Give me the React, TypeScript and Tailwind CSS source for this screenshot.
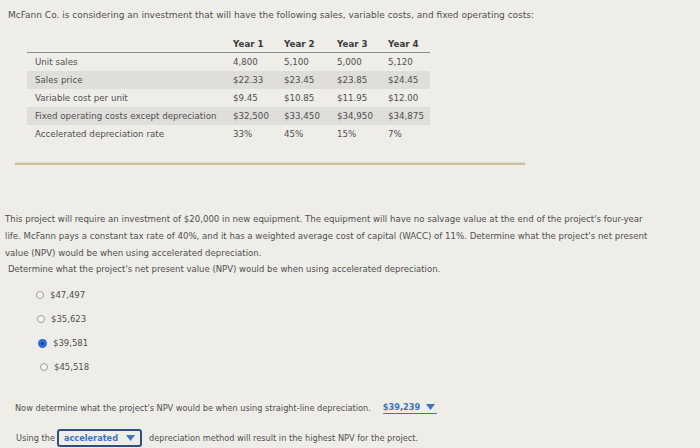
import React from 'react';

const years = ['Year 1', 'Year 2', 'Year 3', 'Year 4'];

const rows = [
  { label: 'Unit sales', values: ['4,800', '5,100', '5,000', '5,120'], shade: false },
  { label: 'Sales price', values: ['$22.33', '$23.45', '$23.85', '$24.45'], shade: true },
  { label: 'Variable cost per unit', values: ['$9.45', '$10.85', '$11.95', '$12.00'], shade: false },
  { label: 'Fixed operating costs except depreciation', values: ['$32,500', '$33,450', '$34,950', '$34,875'], shade: true },
  { label: 'Accelerated depreciation rate', values: ['33%', '45%', '15%', '7%'], shade: false },
];

const options = [
  { value: '$47,497', checked: false, indent: 'pl-[36px]' },
  { value: '$35,623', checked: false, indent: 'pl-[37px]' },
  { value: '$39,581', checked: true, indent: 'pl-[38px]' },
  { value: '$45,518', checked: false, indent: 'pl-[40px]' },
];

const Caret = () => (
  <svg width="9" height="6" viewBox="0 0 9 6" className="inline-block">
    <path d="M0 0 L9 0 L4.5 6 Z" fill="#3d74bd" />
  </svg>
);

const Radio = ({ checked }: { checked: boolean }) =>
  checked ? (
    <span className="w-[9px] h-[9px] rounded-full bg-[#2f6fd0] flex items-center justify-center shrink-0">
      <span className="w-[3px] h-[3px] rounded-full bg-[#1a3f80]" />
    </span>
  ) : (
    <span className="w-[8px] h-[8px] rounded-full border border-[#9a9a9a] bg-[#f6f6f4] shrink-0" />
  );

export default function App() {
  return (
    <div className="w-[700px] h-[448px] overflow-hidden bg-[#eeede8] text-[#505050] text-[8.5px] leading-none font-['DejaVu_Sans',Verdana,sans-serif]">
      <p className="pl-[8px] pt-[11px] text-[9px]">
        McFann Co. is considering an investment that will have the following sales, variable costs, and fixed operating costs:
      </p>

      {/* data table */}
      <div className="ml-[27px] mt-[17px] w-[403px] text-[8.7px]">
        <div className="grid grid-cols-[206px_51px_53px_51px_42px] h-[16px] items-center border-b border-[#8a8a8a] font-bold text-[#3a3a3a]">
          <span />
          {years.map((y) => (
            <span key={y}>{y}</span>
          ))}
        </div>
        {rows.map((r) => (
          <div
            key={r.label}
            className={`grid grid-cols-[206px_51px_53px_51px_42px] h-[18px] items-center ${r.shade ? 'bg-[#dfdedb]' : ''}`}
          >
            <span className="pl-[8px]">{r.label}</span>
            {r.values.map((v, i) => (
              <span key={i}>{v}</span>
            ))}
          </div>
        ))}
      </div>

      <div className="ml-[15px] mt-[19px] w-[510px] h-[3px] bg-[#c9c1a2] border-t border-[#e3dcc2]" />

      <div className="pl-[5px] mt-[46px] leading-[17px] text-[8.6px]">
        This project will require an investment of $20,000 in new equipment. The equipment will have no salvage value at the end of the project's four-year
        <br />
        life. McFann pays a constant tax rate of 40%, and it has a weighted average cost of capital (WACC) of 11%. Determine what the project's net present
        <br />
        value (NPV) would be when using accelerated depreciation.
      </div>

      <p className="pl-[8px] mt-[3px]">
        Determine what the project's net present value (NPV) would be when using accelerated depreciation.
      </p>

      <div className="mt-[17px] flex flex-col gap-[15px]">
        {options.map((o) => (
          <div key={o.value} className={`flex items-center gap-[6px] h-[9px] ${o.indent}`}>
            <Radio checked={o.checked} />
            <span>{o.value}</span>
          </div>
        ))}
      </div>

      <div className="pl-[15px] mt-[31px] flex items-center text-[8.2px]">
        <span>Now determine what the project's NPV would be when using straight-line depreciation.</span>
        <span className="ml-[12px] flex items-center gap-[6px] border-b border-[#3d74bd] pb-[2px] pr-[2px] font-bold text-[#3d74bd]">
          $39,239 <Caret />
        </span>
      </div>

      <div className="pl-[16px] mt-[15px] flex items-center text-[8.2px]">
        <span>Using the</span>
        <span className="ml-[2px] flex items-center gap-[8px] h-[18px] px-[5px] border-2 border-[#2f4f80] rounded-[3px] font-bold text-[#3d74bd]">
          accelerated <Caret />
        </span>
        <span className="ml-[7px]">depreciation method will result in the highest NPV for the project.</span>
      </div>
    </div>
  );
}
